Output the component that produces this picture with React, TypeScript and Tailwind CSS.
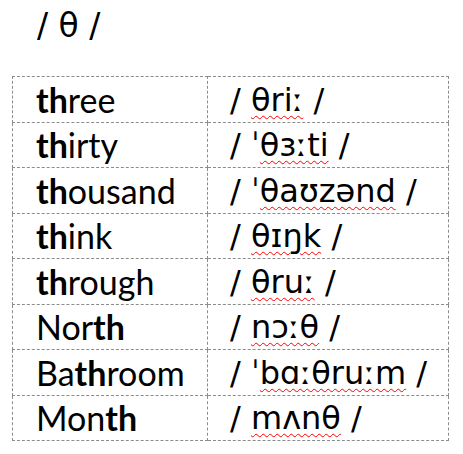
const rows: { pre: string; bold: string; post: string; ipaPre: string; ipa: string }[] = [
  { pre: "", bold: "th", post: "ree", ipaPre: "", ipa: "θriː" },
  { pre: "", bold: "th", post: "irty", ipaPre: "ˈ", ipa: "θɜːti" },
  { pre: "", bold: "th", post: "ousand", ipaPre: "ˈ", ipa: "θaʊzənd" },
  { pre: "", bold: "th", post: "ink", ipaPre: "", ipa: "θɪŋk" },
  { pre: "", bold: "th", post: "rough", ipaPre: "", ipa: "θruː" },
  { pre: "Nor", bold: "th", post: "", ipaPre: "", ipa: "nɔːθ" },
  { pre: "Ba", bold: "th", post: "room", ipaPre: "ˈ", ipa: "bɑːθruːm" },
  { pre: "Mon", bold: "th", post: "", ipaPre: "", ipa: "mʌnθ" },
];

export default function App() {
  return (
    <div className="h-[454px] w-[463px] bg-white pt-[7px] text-black">
      <div className="pl-[37px] font-['DejaVu_Sans',sans-serif] text-[33px] leading-[38px]">/ θ /</div>
      <table className="mt-[31px] ml-[12px] w-[437px] border-collapse">
        <tbody>
          {rows.map((r) => (
            <tr key={r.ipa} className="h-[45.5px]">
              <td className="w-[195px] border border-dashed border-[#8c8c8c] pl-[23px] align-bottom pb-[2px] font-['Lato',sans-serif] text-[34px] leading-[40px]">
                {r.pre}
                <b className="font-bold">{r.bold}</b>
                {r.post}
              </td>
              <td className="border border-dashed border-[#8c8c8c] pl-[22px] align-bottom pb-[2px] font-['DejaVu_Sans',sans-serif] text-[32px] leading-[40px] whitespace-nowrap">
                {"/ "}
                {r.ipaPre}
                <span className="underline decoration-wavy decoration-[#ff0000] decoration-1 underline-offset-[4px]">{r.ipa}</span>
                {" /"}
              </td>
            </tr>
          ))}
        </tbody>
      </table>
    </div>
  );
}
